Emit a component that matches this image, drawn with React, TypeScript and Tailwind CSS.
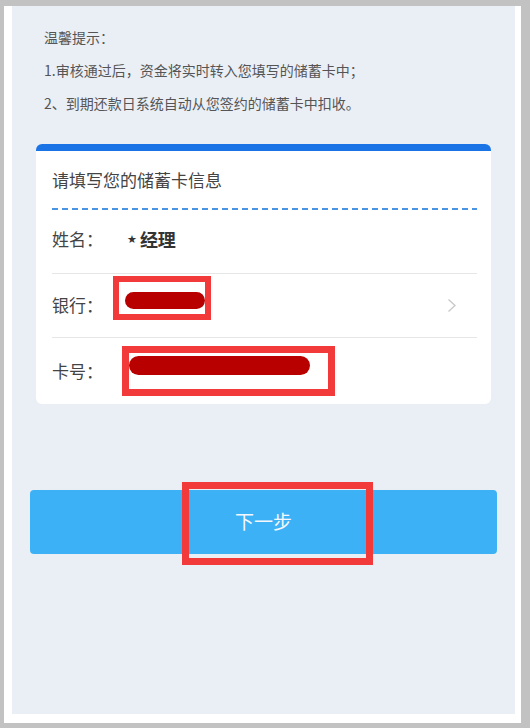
export default function App() {
  return (
    <div
      className="w-[530px] h-[728px] bg-[#c2c2c2] pt-[6px] pl-[4px] pr-[9px] pb-[5px]"
      style={{ fontFamily: '"Noto Sans CJK SC", "Noto Sans", sans-serif' }}
    >
      <div className="h-full bg-white pl-[8px] pr-[6px] pb-[9px]">
        <div className="h-full bg-[#eaeff6] px-[18px] pt-[15px]">
          {/* hints */}
          <div className="pl-[14px] text-[14px] leading-[33px] text-[#555]">
            <p>温馨提示：</p>
            <p>1.审核通过后，资金将实时转入您填写的储蓄卡中；</p>
            <p>2、到期还款日系统自动从您签约的储蓄卡中扣收。</p>
          </div>

          {/* card */}
          <div className="mx-[6px] mt-[24px] rounded-[6px] border-t-[7px] border-[#1a74e6] bg-white pl-4 pr-[14px]">
            <div className="flex h-[57px] items-center pt-[1px] text-[17px] text-[#444]">
              请填写您的储蓄卡信息
            </div>
            <div className="h-[1.5px] bg-[repeating-linear-gradient(90deg,#4a94e4_0_6px,transparent_6px_10px)]" />

            <div className="flex h-[63px] items-center pb-[4px] text-[17px] text-[#444]">
              <span className="w-[54px]">姓名：</span>
              <span
                className="ml-[21px] translate-y-[1px] text-[11px] text-[#333]"
                style={{ fontFamily: '"DejaVu Sans", sans-serif' }}
              >
                ★
              </span>
              <span className="ml-[3px] text-[18px] font-bold text-[#333]">经理</span>
            </div>
            <div className="h-px bg-[#e6e6e6]" />

            <div className="flex h-[63px] items-center text-[17px] text-[#444]">
              <span className="w-[54px]">银行：</span>
              <div className="ml-[7px] -mt-[14px] h-[44px] w-[98px] border-[6px] border-[#f23a3a] pl-[6px] pt-[10px]">
                <div className="h-[17px] w-[80px] rounded-full bg-[#b80000]" />
              </div>
              <svg className="ml-auto mr-[20px]" width="10" height="15" viewBox="0 0 10 15" fill="none">
                <path d="M1.5 1.5 L8 7.5 L1.5 13.5" stroke="#c8c8c8" strokeWidth="1.3" />
              </svg>
            </div>
            <div className="h-px bg-[#e6e6e6]" />

            <div className="flex h-[66px] items-center text-[17px] text-[#444]">
              <span className="w-[54px]">卡号：</span>
              <div className="ml-[16px] h-[50px] w-[213px] border-[7px] border-[#f23a3a] pt-[3px]">
                <div className="h-[19px] w-[181px] rounded-full bg-[#b80000]" />
              </div>
            </div>
          </div>

          {/* button */}
          <button className="relative mt-[86px] flex h-[64px] w-full items-center justify-center rounded-[4px] bg-[#3db1f6] text-[19px] text-[#f4f8fc]">
            下一步
            <span className="absolute left-[152px] top-[-8px] h-[83px] w-[191px] border-[7px] border-[#f23a3a]" />
          </button>
        </div>
      </div>
    </div>
  );
}
